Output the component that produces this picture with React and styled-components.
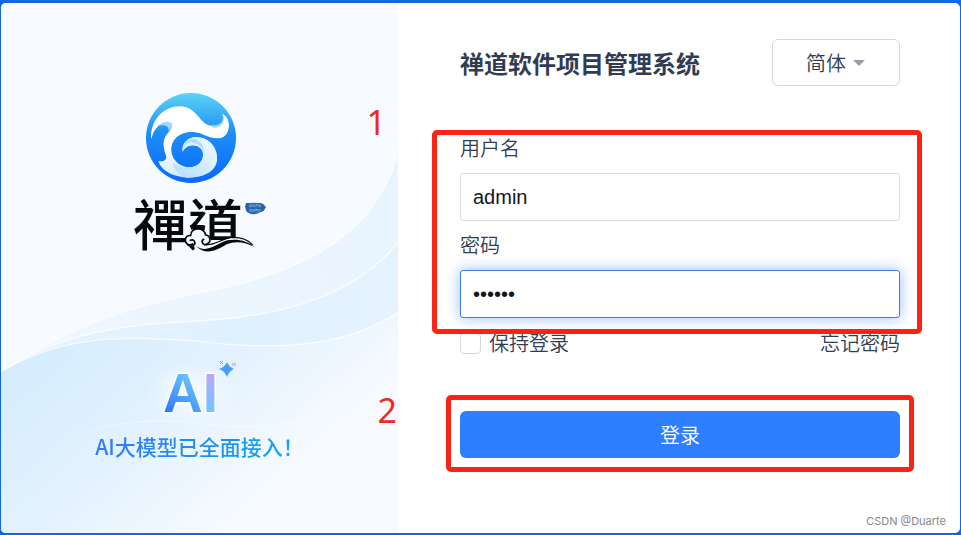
import React from 'react';
import styled, { createGlobalStyle, css } from 'styled-components';

const GlobalStyle = createGlobalStyle`
  *, *::before, *::after { box-sizing: border-box; }
  body {
    margin: 0;
    background: #1467dd;
    color: #313c52;
    font-family: "Liberation Sans", "Noto Sans CJK SC", sans-serif;
    font-size: 20px;
  }
`;

const Page = styled.main`
  min-height: 100vh;
  padding: 3px 1px 2px;
  display: flex;
`;

const Card = styled.div`
  position: relative;
  flex: 1;
  display: grid;
  grid-template-columns: 397fr 562fr;
  background: #fff;
  border-radius: 5px;
  overflow: hidden;
`;

const BrandPanel = styled.section`
  position: relative;
  display: flex;
  flex-direction: column;
  align-items: center;
  padding: 88px 0 71px;
  background: #f7fbff;
`;

const Waves = styled.svg`
  position: absolute;
  inset: 0;
  width: 100%;
  height: 100%;
`;

const BrandLogo = styled.svg`
  position: relative;
  width: 136px;
  height: 164px;
  overflow: visible;
`;

const Promo = styled.div`
  position: relative;
  margin-top: auto;
  display: flex;
  flex-direction: column;
  align-items: center;
  gap: 10px;
`;

const AiMark = styled.svg`
  width: 84px;
  height: 64px;
  overflow: visible;
`;

const Tagline = styled.p`
  margin: 0;
  font: 500 21px/32px "Noto Sans CJK SC", sans-serif;
  color: transparent;
  background: linear-gradient(90deg, #3478f6, #1f8ff0 50%, #0fabe9);
  background-clip: text;
  -webkit-background-clip: text;
`;

const FormPanel = styled.section`
  padding: 36px 60px 32px 62px;
`;

const Header = styled.header`
  display: flex;
  align-items: center;
  justify-content: space-between;
`;

const Title = styled.h1`
  margin: 0;
  font: 700 24px/36px "Noto Sans CJK SC", sans-serif;
`;

const LanguagePicker = styled.label`
  display: grid;
  align-items: center;
  width: 128px;

  > * { grid-area: 1 / 1; }

  svg {
    justify-self: end;
    margin-right: 35px;
    pointer-events: none;
  }
`;

const LanguageSelect = styled.select`
  appearance: none;
  width: 100%;
  height: 47px;
  padding: 0 33px;
  border: 1px solid #d5d7db;
  border-radius: 6px;
  background: #fff;
  color: inherit;
  font: 350 20px/30px "Noto Sans CJK SC", sans-serif;
`;

const LoginForm = styled.form`
  margin-top: 47px;
`;

const Highlighted = styled.div`
  position: relative;
`;

const Outline = styled.div`
  position: absolute;
  inset: ${(p) => p.$inset};
  border: 5px solid #fb2314;
  border-radius: 5px;
  pointer-events: none;
`;

const StepNumber = styled.span`
  position: absolute;
  top: ${(p) => p.$top};
  right: 100%;
  margin-right: ${(p) => p.$gap};
  color: #ee2a20;
  font: 400 34px/40px "Noto Sans", sans-serif;
`;

const Fields = styled.div`
  display: grid;
  gap: 9px;
`;

const Field = styled.div`
  display: grid;
  gap: 10px;
`;

const textStyle = css`
  font: 350 20px/30px "Noto Sans CJK SC", sans-serif;
  color: #313c52;
`;

const FieldLabel = styled.label`
  ${textStyle}
`;

const TextInput = styled.input`
  width: 100%;
  height: 48px;
  padding: 0 12px;
  border: 1px solid ${(p) => (p.$active ? '#3f7fd6' : '#d8dade')};
  border-radius: 3px;
  outline: none;
  background: #fff;
  color: #12161f;
  font: 400 20px/30px "Liberation Sans", sans-serif;
  box-shadow: ${(p) => (p.$active ? '0 0 14px rgba(46, 127, 255, 0.5)' : 'none')};
`;

const Options = styled.div`
  display: flex;
  align-items: center;
  justify-content: space-between;
  margin-top: 10px;
`;

const KeepLogin = styled.label`
  ${textStyle}
  display: flex;
  align-items: center;
  gap: 8px;
`;

const Checkbox = styled.input`
  appearance: none;
  width: 21px;
  height: 21px;
  margin: 0;
  border: 1px solid #d5d7db;
  border-radius: 4px;
  background: #fff;
`;

const ForgotLink = styled.a`
  ${textStyle}
  text-decoration: none;
`;

const SubmitArea = styled(Highlighted)`
  margin-top: 53px;
`;

const SubmitButton = styled.button`
  display: block;
  width: 100%;
  height: 47px;
  border: 0;
  border-radius: 6px;
  background: #2e7fff;
  color: #fff;
  font: 350 20px/30px "Noto Sans CJK SC", sans-serif;
`;

const Watermark = styled.small`
  position: absolute;
  right: 14px;
  bottom: 4px;
  color: #85878b;
  font: 400 11px/16px "Inter", sans-serif;
`;

function WaveBackdrop() {
  const first = 'M3 1088C200 960 380 900 600 857C850 812 1120 720 1195 450';
  const second = 'M3 1088C200 965 380 952 600 940C850 925 1060 870 1195 710';
  const third = 'M3 1088C200 975 380 985 600 1000C850 1030 1050 1010 1195 915';
  const close = 'V1561H3Z';
  return (
    <Waves viewBox="3 9 1192 1552" preserveAspectRatio="none" aria-hidden="true">
      <defs>
        <linearGradient id="wave-a" x1="0" y1="0.6" x2="1" y2="0.2">
          <stop offset="0" stopColor="#f0f7ff" />
          <stop offset="1" stopColor="#e8f4fe" />
        </linearGradient>
        <linearGradient id="wave-b" x1="0" y1="0" x2="1" y2="0">
          <stop offset="0" stopColor="#e8f4ff" />
          <stop offset="0.6" stopColor="#dff0fe" />
          <stop offset="1" stopColor="#e6f3ff" />
        </linearGradient>
        <linearGradient id="wave-c" gradientUnits="userSpaceOnUse" x1="150" y1="1020" x2="640" y2="1600">
          <stop offset="0" stopColor="#d5edfd" />
          <stop offset="0.5" stopColor="#e4f2fe" />
          <stop offset="1" stopColor="#f7fbff" />
        </linearGradient>
      </defs>
      <path d={first + close} fill="url(#wave-a)" />
      <path d={second + close} fill="url(#wave-b)" />
      <path d={third + close} fill="url(#wave-c)" />
      <g fill="none" stroke="#fbfeff" strokeWidth="4" strokeOpacity="0.85">
        <path d={first} />
        <path d={second} />
        <path d={third} />
        <path d="M270 1262C500 1200 600 1255 740 1250C830 1248 900 1240 960 1210" strokeWidth="3" strokeOpacity="0.6" />
      </g>
    </Waves>
  );
}

function ZenLogo() {
  return (
    <BrandLogo viewBox="132 91 136 164" role="img" aria-label="禪道">
      <defs>
        <linearGradient id="disc" x1="0" y1="0" x2="0" y2="1">
          <stop offset="0" stopColor="#5dd3f5" />
          <stop offset="0.45" stopColor="#1d8df6" />
          <stop offset="1" stopColor="#0869ff" />
        </linearGradient>
        <linearGradient id="wave-body" gradientUnits="userSpaceOnUse" x1="150" y1="190" x2="180" y2="290">
          <stop offset="0" stopColor="#ffffff" />
          <stop offset="1" stopColor="#cfeaff" />
        </linearGradient>
        <linearGradient id="curl" gradientUnits="userSpaceOnUse" x1="280" y1="190" x2="190" y2="290">
          <stop offset="0" stopColor="#eef8ff" />
          <stop offset="1" stopColor="#b9e0fd" />
        </linearGradient>
      </defs>
      <g transform="translate(120 80) scale(0.33333)">
        <circle cx="213" cy="174" r="135" fill="url(#disc)" />
        <path
          fill="url(#wave-body)"
          d="M94 178C88 130 125 78 180 79C232 80 238 135 275 138C299 139 317 126 307 101C327 110 333 139 320 161C303 186 268 172 246 162C201 145 153 166 154 211C155 243 183 262 208 262C235 262 251 242 249 220C246 192 203 185 188 215C184 190 204 171 231 172C267 173 291 202 291 234C291 274 252 292 204 293C151 290 122 268 115 243C130 247 142 238 138 227C130 203 127 187 137 168C147 154 159 144 155 133C145 120 104 127 94 178Z"
        />
        <path
          fill="url(#curl)"
          d="M188 215C184 190 204 171 231 172C267 173 291 202 291 234C291 274 252 292 204 293C180 290 163 270 157 248C171 259 190 263 208 262C235 262 251 242 249 220C246 192 203 185 188 215Z"
        />
        <path fill="#b5dcfb" d="M190 205C198 183 221 183 238 196C252 207 254 224 248 235C258 206 247 183 222 176C202 177 192 190 190 205Z" />
        <path fill="#a6d6fc" d="M112 139C130 121 151 123 157 131C158 140 151 147 145 153C149 138 132 132 112 139Z" />
        <path fill="#9ed8fa" d="M307 101C319 123 306 144 280 143L268 134C294 141 316 127 307 101Z" />
      </g>
      <text x="133" y="245" fontFamily="Noto Sans CJK TC, sans-serif" fontWeight="500" fontSize="55" fill="#07090c">
        禪道
      </text>
      <g transform="translate(120 80) scale(0.33333)" strokeLinecap="round" strokeLinejoin="round">
        <path
          d="M222 498C202 503 191 486 199 473C201 466 210 466 212 466C214 442 251 441 257 464C273 463 278 488 262 494C300 497 310 470 350 472C375 474 395 486 403 502L403 520H229Z"
          fill="#f7fbff"
        />
        <g fill="none" stroke="#07090c" strokeWidth="5">
          <path d="M218 492C207 499 196 491 196 480C196 470 204 465 212 467C212 441 251 439 257 465C272 467 275 488 259 493C248 497 242 483 251 478" />
          <path d="M211 481C223 476 230 491 219 497C213 500 206 497 203 494" />
          <path d="M253 494C289 498 304 473 341 472C365 472 386 482 397 494" strokeWidth="4" />
        </g>
        <path d="M228 498C262 522 290 490 322 481C352 475 382 482 405 502C376 486 346 482 320 493C287 514 256 526 228 498Z" fill="#07090c" />
        <path d="M378 369C389 370 403 366 413 370C424 366 433 373 438 382C433 387 434 395 423 396C412 402 398 406 386 399C374 393 379 385 375 380Z" fill="#2864ad" />
      </g>
      <g fill="#a9c8ea" fontFamily="Noto Sans CJK SC, sans-serif" fontSize="3">
        <text x="249" y="207">自主开源</text>
        <text x="249" y="212">项目管理</text>
      </g>
    </BrandLogo>
  );
}

function AiPromo() {
  return (
    <Promo>
      <AiMark viewBox="158 356 84 64" role="img" aria-label="AI">
        <defs>
          <linearGradient id="ai-a" gradientUnits="userSpaceOnUse" x1="164" y1="412" x2="194" y2="374">
            <stop offset="0" stopColor="#2e74ff" />
            <stop offset="1" stopColor="#6dcdfd" />
          </linearGradient>
          <linearGradient id="ai-i" gradientUnits="userSpaceOnUse" x1="210" y1="374" x2="210" y2="412">
            <stop offset="0" stopColor="#bba6fb" />
            <stop offset="1" stopColor="#6cc8fe" />
          </linearGradient>
          <radialGradient id="ai-glow">
            <stop offset="0" stopColor="#fff" stopOpacity="0.7" />
            <stop offset="1" stopColor="#fff" stopOpacity="0" />
          </radialGradient>
        </defs>
        <ellipse cx="192" cy="394" rx="46" ry="32" fill="url(#ai-glow)" />
        <text
          x="163"
          y="412"
          fontFamily="Liberation Sans, sans-serif"
          fontWeight="700"
          fontSize="55"
          stroke="#fff"
          strokeWidth="3"
          strokeLinejoin="round"
          paintOrder="stroke"
        >
          <tspan fill="url(#ai-a)">A</tspan>
          <tspan fill="url(#ai-i)">I</tspan>
        </text>
        <path d="M227 362Q229 367 234 369Q229 371 227 377Q225 371 219 369Q225 367 227 362Z" fill="#479ff3" />
        <path d="M220 361L223 364M223 361L220 364" stroke="#58b4f4" />
        <path d="M232 363L236 366M236 363L232 366" stroke="#b9a5ef" />
      </AiMark>
      <Tagline>AI大模型已全面接入！</Tagline>
    </Promo>
  );
}

export default function App() {
  return (
    <>
      <GlobalStyle />
      <Page>
        <Card>
          <BrandPanel>
            <WaveBackdrop />
            <ZenLogo />
            <AiPromo />
          </BrandPanel>
          <FormPanel>
            <Header>
              <Title>禅道软件项目管理系统</Title>
              <LanguagePicker>
                <LanguageSelect aria-label="语言" defaultValue="zh-cn">
                  <option value="zh-cn">简体</option>
                </LanguageSelect>
                <svg width="12" height="6" viewBox="0 0 12 6" aria-hidden="true">
                  <path d="M0 0H12L6 6Z" fill="#9a9fa9" />
                </svg>
              </LanguagePicker>
            </Header>
            <LoginForm onSubmit={(event) => event.preventDefault()}>
              <Highlighted>
                <Fields>
                  <Field>
                    <FieldLabel htmlFor="account">用户名</FieldLabel>
                    <TextInput id="account" type="text" defaultValue="admin" />
                  </Field>
                  <Field>
                    <FieldLabel htmlFor="password">密码</FieldLabel>
                    <TextInput id="password" type="password" defaultValue="123456" $active />
                  </Field>
                </Fields>
                <Outline $inset="-3px -22px -16px -28px" />
                <StepNumber $top="-31px" $gap="74px">1</StepNumber>
              </Highlighted>
              <Options>
                <KeepLogin>
                  <Checkbox type="checkbox" />
                  保持登录
                </KeepLogin>
                <ForgotLink href="#forgot">忘记密码</ForgotLink>
              </Options>
              <SubmitArea>
                <SubmitButton type="submit">登录</SubmitButton>
                <Outline $inset="-16px -14px -14px -14px" />
                <StepNumber $top="-21px" $gap="63px">2</StepNumber>
              </SubmitArea>
            </LoginForm>
          </FormPanel>
          <Watermark>CSDN @Duarte</Watermark>
        </Card>
      </Page>
    </>
  );
}
